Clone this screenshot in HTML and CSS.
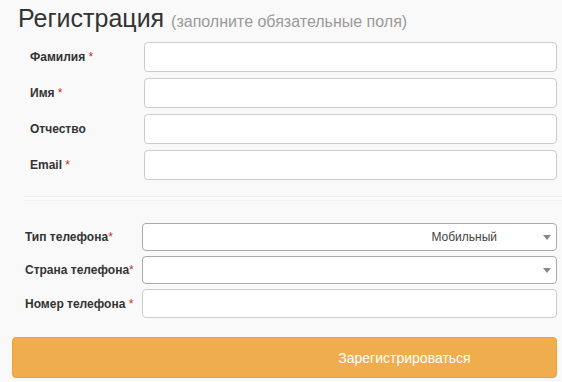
FILE: index.html
```html
<!DOCTYPE html>
<html lang="ru">
<head>
<meta charset="utf-8">
<link rel="stylesheet" href="styles.css">
</head>
<body>
<div class="page">
  <h1 class="title">Регистрация <small class="hint">(заполните обязательные поля)</small></h1>
  <div class="group group-main">
    <div class="row"><label class="lbl">Фамилия <span class="req">*</span></label><div class="input"></div></div>
    <div class="row"><label class="lbl">Имя <span class="req">*</span></label><div class="input"></div></div>
    <div class="row"><label class="lbl">Отчество</label><div class="input"></div></div>
    <div class="row"><label class="lbl">Email <span class="req">*</span></label><div class="input"></div></div>
  </div>
  <div class="divider"></div>
  <div class="group group-phone">
    <div class="row"><label class="lbl">Тип телефона<span class="req">*</span></label><div class="select"><span class="sel-text">Мобильный</span><span class="arrow"></span></div></div>
    <div class="row"><label class="lbl">Страна телефона<span class="req">*</span></label><div class="select"><span class="sel-text"></span><span class="arrow"></span></div></div>
    <div class="row"><label class="lbl">Номер телефона <span class="req">*</span></label><div class="input input-phone"></div></div>
  </div>
  <div class="btn">Зарегистрироваться</div>
</div>
</body>
</html>
```

FILE: styles.css
```css
html, body {
  margin: 0;
  padding: 0;
  background: #f9f9f9;
}
body {
  font-family: "Liberation Sans", Arial, sans-serif;
  color: #333;
  width: 562px;
  height: 382px;
  overflow: hidden;
}
.page {
  padding: 0 5px 0 12px;
}
.title {
  margin: 0;
  padding: 3px 0 0 6px;
  font-weight: normal;
  font-size: 25px;
  line-height: 30px;
  height: 35px;
  color: #333;
}
.hint {
  font-size: 16px;
  color: #999;
}
.group {
  display: flex;
  flex-direction: column;
}
.group-main {
  gap: 6px;
  padding-top: 4px;
}
.row {
  display: flex;
  align-items: center;
}
.lbl {
  font-size: 12px;
  font-weight: bold;
  color: #333;
}
.group-main .lbl {
  width: 114px;
  padding-left: 18px;
}
.group-phone .lbl {
  width: 117px;
  padding-left: 13px;
}
.req {
  color: #c9302c;
  font-weight: normal;
}
.input {
  flex: 1;
  height: 28px;
  background: #fff;
  border: 1px solid #ccc;
  border-radius: 4px;
}
.divider {
  margin: 16px -5px 0 12px;
  height: 3px;
  border-top: 1px solid #ececec;
  border-bottom: 1px solid #f1f1f1;
  background: #fbfbfb;
}
.group-phone {
  gap: 5px;
  padding-top: 22px;
}
.select {
  flex: 1;
  height: 26px;
  background: #fff;
  border: 1px solid #aaa;
  border-radius: 4px;
  display: flex;
  align-items: center;
  justify-content: flex-end;
  font-size: 12px;
  color: #444;
}
.sel-text {
  padding-right: 46px;
}
.arrow {
  width: 0;
  height: 0;
  border-left: 4px solid transparent;
  border-right: 4px solid transparent;
  border-top: 5px solid #888;
  margin-right: 5px;
}
.input-phone {
  height: 27px;
  border-color: #ccc;
}
.btn {
  margin-top: 19px;
  height: 41px;
  background: #f0ad4e;
  border: 1px solid #eea236;
  border-radius: 4px;
  box-sizing: border-box;
  color: #fff;
  font-size: 14px;
  display: flex;
  align-items: center;
  justify-content: center;
  padding-left: 240px;
}
```
